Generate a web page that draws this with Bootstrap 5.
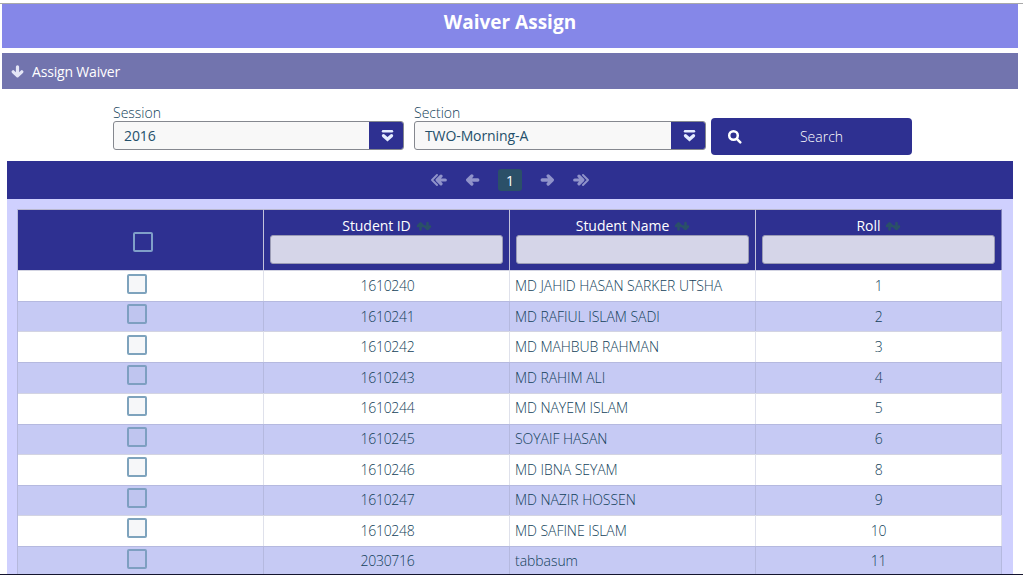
<!DOCTYPE html>
<html lang="en">
<head>
<meta charset="utf-8">
<meta name="viewport" content="width=device-width, initial-scale=1">
<title>Waiver Assign</title>
<link href="https://cdn.jsdelivr.net/npm/bootstrap@5.3.0/dist/css/bootstrap.min.css" rel="stylesheet">
<style>
:root{--navy:#2e3091;--ink:#123f5a}
body{font-family:"Open Sans","Noto Sans",sans-serif;font-size:14px;line-height:20px;color:var(--ink);height:575px;overflow:hidden;background:#fff;border-bottom:1px solid #15152e}
.topline{height:4px;padding-top:3px;background:#a9a9a9;background-clip:content-box}
.page{width:1016px;margin-left:2px}
.title-bar{height:44px;background:#8587e8;color:#fff;font-size:19px;font-weight:700;line-height:36px}
.sub-bar{height:36px;margin-top:5px;background:#7274ae;color:#fff;padding-left:9px}
.sub-bar span{margin-left:8px;padding-top:2px;letter-spacing:-.18px}
svg{display:block;fill:none;stroke:currentColor;stroke-linecap:round;stroke-linejoin:round}
.filters{height:72px;padding:14px 0 0 111px}
.field{width:291px}
.field + .field{width:292px;margin-left:10px}
.field label{display:block;height:18px;line-height:19px;font-weight:300}
.pick{height:29px;border:1px solid #85888f;border-radius:3px;background:#f8f8f8;line-height:27px;padding-left:10px;overflow:hidden;font-weight:500;letter-spacing:-.1px}
.pick:not(:hover) > span:first-child{color:#24506b}
.pick-btn{width:35px;height:29px;background:var(--navy);color:#e4ecff;margin:-1px -1px -1px 0;padding-left:1px}
.btn-find{width:201px;height:37px;margin:15px 0 0 5px;background:var(--navy)!important;color:#fff!important;border:0;border-radius:4px;font-size:14px;font-weight:300;padding:0 11px 0 16px}
.panel{width:1006px;margin-left:5px;background:#cfd0fe}
.pager{height:38px;background:var(--navy);color:#9093ca}
.pager .cur{width:24px;height:22px;background:#2b5068;color:#fff;border-radius:3px;line-height:23px;margin:0 18px}
.flip{transform:scaleX(-1)}
.gap-arrow{margin-left:18px}
.grid-table{width:985px;margin:10px 0 0 10px;table-layout:fixed;border-collapse:separate;border-spacing:0;border-left:1px solid #b5b8dc}
.grid-table th{height:61px;background:var(--navy);color:#fff;font-weight:500;padding:8px 6px 0;vertical-align:top;border-top:1px solid #b8b7ce;border-right:1px solid #c3c3dc}
.grid-table th:last-child{border-right-color:#7c7eb9}
.caption-line{height:17px;line-height:16px;letter-spacing:-.05px;padding-left:1px}
.caption-line svg{color:#2a5068;margin:2px 0 0 5px}
.filter-box{height:29px;border:1px solid #9a9bb5;border-radius:3px;background:#d5d5e8;width:100%;display:block}
.tick{width:20px;height:20px;border:2px solid #7ea3bd;border-radius:2px;background:#f6f7f9}
.head-tick{background:transparent;border-color:#809fc9;margin:14px 0 0 109px}
.grid-table td{height:31px;padding:1px 5px 0;background:#fff;border-top:1px solid #d3d4e2;border-right:1px solid #dfe1eb;font-weight:300;vertical-align:top;line-height:28px;white-space:nowrap;overflow:hidden;text-align:center;letter-spacing:-.3px}
.grid-table .short td{height:30px}
.grid-table .raised td{padding-top:0}
.grid-table td:nth-child(2){padding-left:7px}
.grid-table td:nth-child(3){text-align:left;letter-spacing:-.05px}
.grid-table tbody tr:nth-child(even) td{background:#c6caf4;border-color:#b5b9df}
.grid-table tr:nth-child(even) .tick{background:#bfc5ef;border-color:#7e9fc1}
.grid-table td .tick{margin:1px 0 0 104px}
.grid-table tr:is(:first-child,:nth-child(3),.raised) td .tick{margin-top:2px}
</style>
</head>
<body>
<svg width="0" height="0" class="position-absolute">
<symbol id="arrow" viewBox="0 0 14 12"><path d="M12.300 6H2.500M6.300 2 2.200 6l4.100 4" stroke-width="3.300"/></symbol>
<symbol id="arrow2" viewBox="0 0 16 12"><path d="M14.300 6H8M10 2.200 6.200 6l3.800 3.800" stroke-width="3.200"/><path d="M6 1 1 6l5 5" stroke-width="1.900"/></symbol>
<symbol id="sort" viewBox="0 0 16 12"><path d="M4.500 9.500V4M2 6 4.500 3.500 7 6M11.500 3v6M9 6.500 11.500 9 14 6.500" stroke-width="2.600"/></symbol>
<symbol id="pick" viewBox="0 0 12 12"><path d="M1.500 1.300h9" stroke-width="2.400"/><path d="m2 5.700 4 3.600 4-3.600" stroke-width="3.300" stroke-linejoin="miter"/></symbol>
</svg>
<div class="topline"></div>
<main class="page">
  <div class="title-bar text-center">Waiver Assign</div>
  <div class="sub-bar d-flex align-items-center"><svg width="13" height="13" viewBox="0 0 13 13" stroke-width="3.200" style="color:#e4e6f6"><path d="M6.500 1.800v8M2.200 6.800l4.300 4.100 4.300-4.100"/></svg><span>Assign Waiver</span></div>
  <div class="filters d-flex">
    <div class="field"><label>Session</label><div class="pick d-flex justify-content-between"><span>2016</span><span class="pick-btn d-flex align-items-center justify-content-center"><svg width="13" height="12"><use href="#pick"/></svg></span></div></div>
    <div class="field"><label>Section</label><div class="pick d-flex justify-content-between"><span>TWO-Morning-A</span><span class="pick-btn d-flex align-items-center justify-content-center"><svg width="13" height="12"><use href="#pick"/></svg></span></div></div>
    <button class="btn btn-find d-flex align-items-center" type="button"><svg width="15" height="15" viewBox="0 0 15 15" stroke-width="2.500"><circle cx="6.500" cy="6.500" r="4.300"/><path d="m9.800 9.800 3.500 3.500"/></svg><span class="flex-fill text-center">Search</span></button>
  </div>
  <section class="panel">
    <nav class="pager d-flex align-items-center justify-content-center">
      <svg width="16" height="12"><use href="#arrow2"/></svg>
      <svg class="gap-arrow" width="15" height="12"><use href="#arrow"/></svg>
      <span class="cur text-center">1</span>
      <svg class="flip" width="15" height="12"><use href="#arrow"/></svg>
      <svg class="flip gap-arrow" width="16" height="12"><use href="#arrow2"/></svg>
    </nav>
    <table class="grid-table">
      <thead><tr id="head"><th><div class="tick head-tick"></div></th></tr></thead>
      <tbody id="rows"></tbody>
    </table>
  </section>
</main>
<script src="https://cdn.jsdelivr.net/npm/bootstrap@5.3.0/dist/js/bootstrap.bundle.min.js"></script>
<script>
document.getElementById('head').innerHTML += ['Student ID','Student Name','Roll'].map(t =>
  `<th><div class="caption-line d-flex justify-content-center">${t}<svg width="16" height="12"><use href="#sort"/></svg></div><input class="filter-box" aria-label="${t}"></th>`).join('');
// Row pitch averages 30.6px: a few rows are one pixel shorter or sit one pixel higher.
const shortRows = [1, 5, 7], raisedRows = [4, 5, 7, 9];
document.getElementById('rows').innerHTML = [
  [1610240,'MD JAHID HASAN SARKER UTSHA',1],[1610241,'MD RAFIUL ISLAM SADI',2],[1610242,'MD MAHBUB RAHMAN',3],
  [1610243,'MD RAHIM ALI',4],[1610244,'MD NAYEM ISLAM',5],[1610245,'SOYAIF HASAN',6],[1610246,'MD IBNA SEYAM',8],
  [1610247,'MD NAZIR HOSSEN',9],[1610248,'MD SAFINE ISLAM',10],[2030716,'tabbasum',11]
].map((r, i) => `<tr class="${shortRows.includes(i) ? 'short' : ''} ${raisedRows.includes(i) ? 'raised' : ''}"><td><div class="tick"></div></td>${r.map(v => `<td>${v}</td>`).join('')}</tr>`).join('');
</script>
</body>
</html>
